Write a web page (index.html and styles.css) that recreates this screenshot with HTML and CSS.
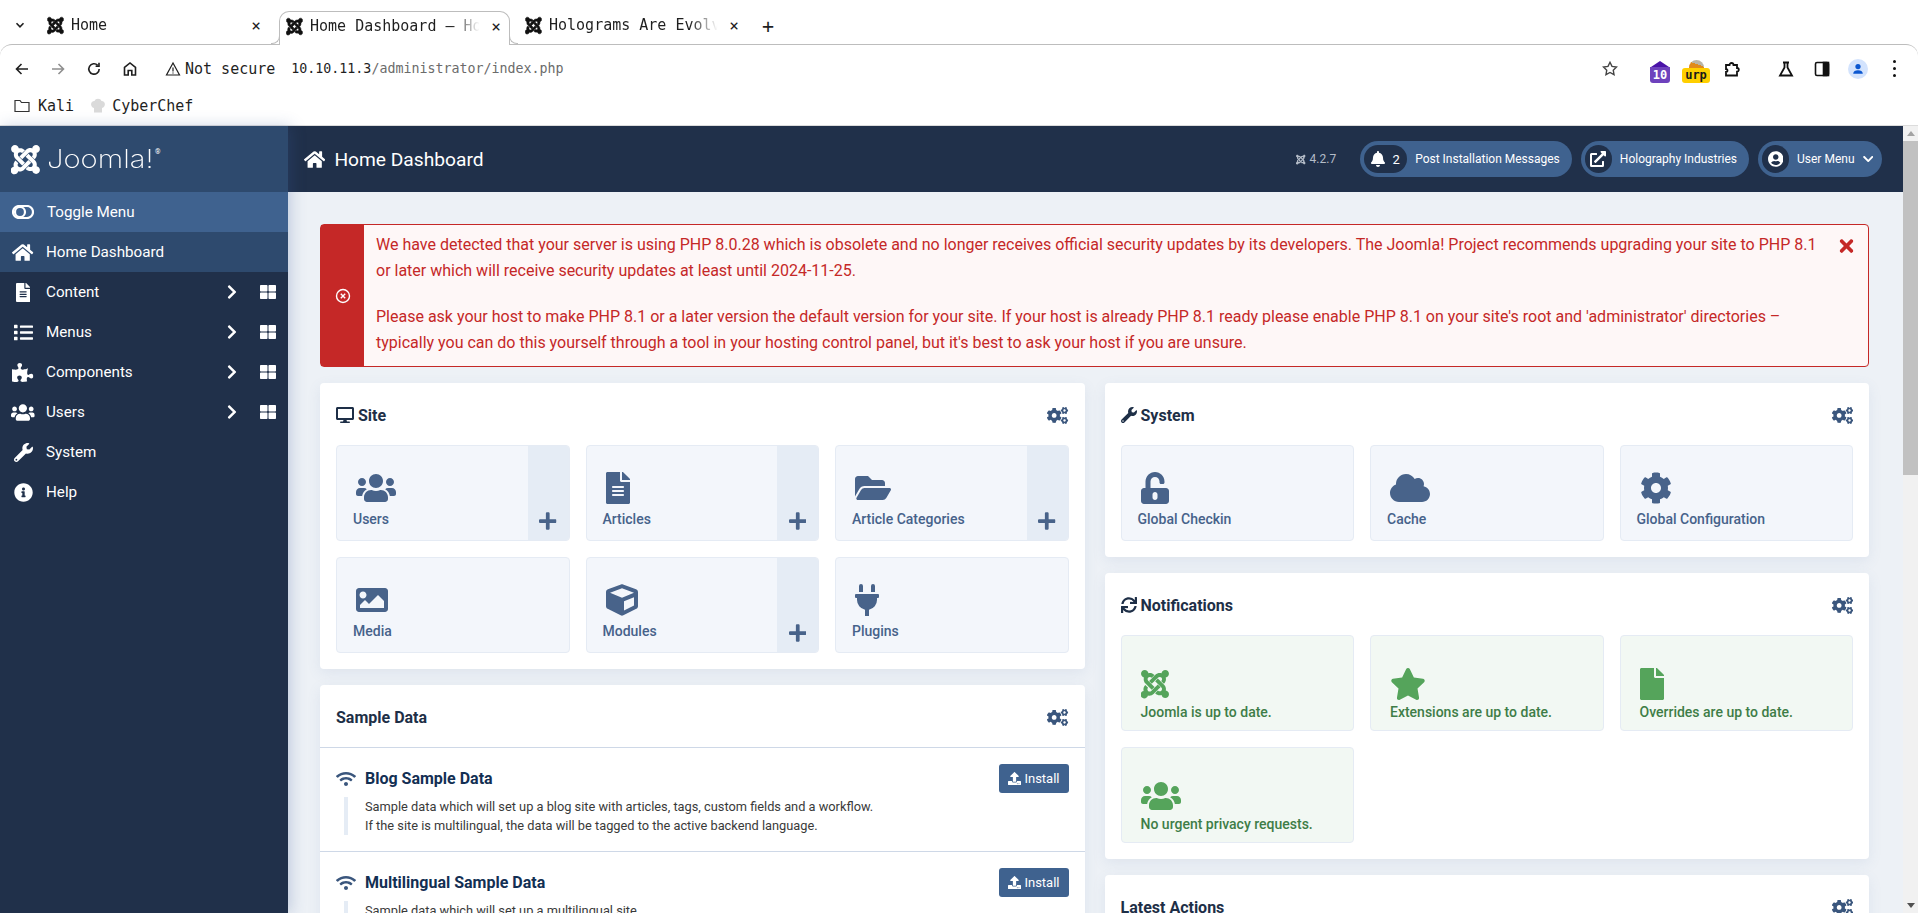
FILE: index.html
```html
<!DOCTYPE html>
<html lang="en">

<head>
    <meta charset="UTF-8">
    <meta name="viewport" content="width=device-width, initial-scale=1.0">
    <title>Home Dashboard - Holography Industries</title>
    <link rel="stylesheet" href="styles.css">
</head>

<body>
    <!-- icon sprite -->
    <svg class="sprite" xmlns="http://www.w3.org/2000/svg">
        <symbol id="i-joomla" viewBox="0 0 448 512"><path d="M.6 92.1C.6 58.8 27.4 32 60.4 32c30 0 54.5 21.9 59.2 50.2 32.6-7.6 67.1.6 96.5 30l-44.3 44.3c-20.5-20.5-42.6-16.3-55.4-3.5-14.3 14.3-14.3 37.9 0 52.2l99.5 99.5-44 44.3c-87.7-87.2-49.7-49.7-99.8-99.7-26.8-26.5-35-64.8-24.8-98.9C20.4 144.6.6 120.7.6 92.1zm129.5 116.4l44.3 44.3c10-10 89.7-89.7 99.7-99.8 14.3-14.3 37.6-14.3 51.9 0 12.8 12.8 17 35-3.5 55.4l44 44.3c31.2-31.2 38.5-67.6 28.9-101.2 29.2-4.1 51.9-29.2 51.9-59.5 0-33.2-26.8-60.1-59.8-60.1-30.3 0-55.4 22.5-59.5 51.6-33.8-9.9-71.7-1.5-98.3 25.1-18.7 19-91.6 92-99.6 100.9zm266.3 152.2c8.2-32.7-.9-68.5-26.3-93.9-11.8-12-97.3-97.3-99.5-99.5l-44.3 44.3 99.5 99.5c14.3 14.3 14.3 37.6 0 51.9-12.8 12.8-35 17-55.4-3.5l-44 44.3c27.6 30.2 68 38.8 102.7 28 5.5 27.4 29.7 48 58.9 48 33 0 59.8-26.8 59.8-60.1 0-30.2-22.5-55-51.4-59zm-84.3-53.1l-44-44.3c-87.2 87.2-49.7 49.7-99.8 99.7-20.5 20.5-42.6 16.3-55.4 3.5-14.3-14.3-14.3-37.6 0-51.9l-44.3-44.3c-26.2 26.2-35.3 63.8-26.3 97.6-28.9 4.6-50.2 29.4-50.2 58.4 0 33.2 26.8 60.1 59.8 60.1 28.9 0 53-20.2 59-47.2 33.3 8.1 67.6-.7 95.6-28.7 13.7-13.5 78.2-78.1 105.6-104z"/></symbol>
        <symbol id="i-home" viewBox="0 0 576 512"><path d="M280.37 148.26L96 300.11V464a16 16 0 0 0 16 16l112.06-.29a16 16 0 0 0 15.92-16V368a16 16 0 0 1 16-16h64a16 16 0 0 1 16 16v95.64a16 16 0 0 0 16 16.05L464 480a16 16 0 0 0 16-16V300L295.67 148.26a12.19 12.19 0 0 0-15.3 0zM571.6 251.47L488 182.56V44.05a12 12 0 0 0-12-12h-56a12 12 0 0 0-12 12v72.61L318.47 43a48 48 0 0 0-61 0L4.34 251.47a12 12 0 0 0-1.6 16.9l25.5 31A12 12 0 0 0 45.15 301l235.22-193.74a12.19 12.19 0 0 1 15.3 0L530.9 301a12 12 0 0 0 16.9-1.6l25.5-31a12 12 0 0 0-1.7-16.93z"/></symbol>
        <symbol id="i-users" viewBox="0 0 640 512"><path d="M96 224c35.3 0 64-28.7 64-64s-28.7-64-64-64-64 28.7-64 64 28.7 64 64 64zm448 0c35.3 0 64-28.7 64-64s-28.7-64-64-64-64 28.7-64 64 28.7 64 64 64zm32 32h-64c-17.6 0-33.5 7.1-45.1 18.6 40.3 22.1 68.9 62 75.1 109.4h66c17.7 0 32-14.3 32-32v-32c0-35.3-28.7-64-64-64zm-256 0c61.9 0 112-50.1 112-112S381.9 32 320 32 208 82.1 208 144s50.1 112 112 112zm76.8 32h-8.3c-20.8 10-43.9 16-68.5 16s-47.6-6-68.5-16h-8.3C179.6 288 128 339.6 128 403.2V432c0 26.5 21.5 48 48 48h288c26.5 0 48-21.5 48-48v-28.8c0-63.6-51.6-115.2-115.2-115.2zm-223.7-13.4C161.5 263.1 145.6 256 128 256H64c-35.3 0-64 28.7-64 64v32c0 17.7 14.3 32 32 32h65.9c6.3-47.4 34.9-87.3 75.2-109.4z"/></symbol>
        <symbol id="i-file-alt" viewBox="0 0 384 512"><path d="M224 136V0H24C10.7 0 0 10.7 0 24v464c0 13.3 10.7 24 24 24h336c13.3 0 24-10.7 24-24V160H248c-13.2 0-24-10.8-24-24zm64 236c0 6.6-5.4 12-12 12H108c-6.6 0-12-5.4-12-12v-8c0-6.6 5.4-12 12-12h168c6.6 0 12 5.4 12 12v8zm0-64c0 6.6-5.4 12-12 12H108c-6.6 0-12-5.4-12-12v-8c0-6.6 5.4-12 12-12h168c6.6 0 12 5.4 12 12v8zm0-72v8c0 6.6-5.4 12-12 12H108c-6.6 0-12-5.4-12-12v-8c0-6.6 5.4-12 12-12h168c6.6 0 12 5.4 12 12zm96-114.1v6.1H256V0h6.1c6.4 0 12.5 2.5 17 7l97.9 98c4.5 4.5 7 10.6 7 16.9z"/></symbol>
        <symbol id="i-file" viewBox="0 0 384 512"><path d="M224 136V0H24C10.7 0 0 10.7 0 24v464c0 13.3 10.7 24 24 24h336c13.3 0 24-10.7 24-24V160H248c-13.2 0-24-10.8-24-24zm160-14.1v6.1H256V0h6.1c6.4 0 12.5 2.5 17 7l97.9 98c4.5 4.5 7 10.6 7 16.9z"/></symbol>
        <symbol id="i-list" viewBox="0 0 512 512"><path d="M80 368H16a16 16 0 0 0-16 16v64a16 16 0 0 0 16 16h64a16 16 0 0 0 16-16v-64a16 16 0 0 0-16-16zm0-320H16A16 16 0 0 0 0 64v64a16 16 0 0 0 16 16h64a16 16 0 0 0 16-16V64a16 16 0 0 0-16-16zm0 160H16a16 16 0 0 0-16 16v64a16 16 0 0 0 16 16h64a16 16 0 0 0 16-16v-64a16 16 0 0 0-16-16zm416 176H176a16 16 0 0 0-16 16v32a16 16 0 0 0 16 16h320a16 16 0 0 0 16-16v-32a16 16 0 0 0-16-16zm0-320H176a16 16 0 0 0-16 16v32a16 16 0 0 0 16 16h320a16 16 0 0 0 16-16V80a16 16 0 0 0-16-16zm0 160H176a16 16 0 0 0-16 16v32a16 16 0 0 0 16 16h320a16 16 0 0 0 16-16v-32a16 16 0 0 0-16-16z"/></symbol>
        <symbol id="i-puzzle" viewBox="0 0 576 512"><path d="M519.442 288.651c-41.519 0-59.5 31.593-82.058 31.593C377.409 320.244 432 144 432 144s-196.288 80-196.288-3.297c0-35.827 36.288-46.25 36.288-85.985C272 19.216 243.885 0 210.539 0c-34.654 0-66.366 18.891-66.366 56.346 0 41.364 31.711 59.277 31.711 81.75C175.885 207.719 0 166.758 0 166.758v333.237s178.635 41.047 178.635-28.662c0-22.473-40-40.107-40-81.471 0-37.456 29.25-56.346 63.577-56.346 33.673 0 61.788 19.216 61.788 54.717 0 39.735-36.288 50.158-36.288 85.985 0 60.803 129.675 25.73 181.23 25.73 0 0-34.725-120.101 25.827-120.101 35.962 0 46.423 36.152 86.308 36.152C556.712 416 576 387.99 576 354.443c0-34.199-18.962-65.792-56.558-65.792z"/></symbol>
        <symbol id="i-wrench" viewBox="0 0 512 512"><path d="M507.73 109.1c-2.24-9.03-13.54-12.09-20.12-5.51l-74.36 74.36-67.88-11.31-11.31-67.88 74.36-74.36c6.62-6.62 3.43-17.9-5.66-20.16-47.38-11.74-99.55.91-136.58 37.93-39.64 39.64-50.55 97.1-34.05 147.2L18.74 402.76c-24.99 24.99-24.99 65.51 0 90.5 24.99 24.99 65.51 24.99 90.5 0l213.21-213.21c50.12 16.71 107.47 5.68 147.37-34.22 37.07-37.07 49.7-89.32 37.91-136.73zM64 472c-13.25 0-24-10.75-24-24 0-13.26 10.75-24 24-24s24 10.74 24 24c0 13.25-10.75 24-24 24z"/></symbol>
        <symbol id="i-info" viewBox="0 0 512 512"><path d="M256 8C119.043 8 8 119.083 8 256c0 136.997 111.043 248 248 248s248-111.003 248-248C504 119.083 392.957 8 256 8zm0 110c23.196 0 42 18.804 42 42s-18.804 42-42 42-42-18.804-42-42 18.804-42 42-42zm56 254c0 6.627-5.373 12-12 12h-88c-6.627 0-12-5.373-12-12v-24c0-6.627 5.373-12 12-12h12v-64h-12c-6.627 0-12-5.373-12-12v-24c0-6.627 5.373-12 12-12h64c6.627 0 12 5.373 12 12v100h12c6.627 0 12 5.373 12 12v24z"/></symbol>
        <symbol id="i-grid" viewBox="0 0 512 512"><path d="M296 32h192c13.255 0 24 10.745 24 24v160c0 13.255-10.745 24-24 24H296c-13.255 0-24-10.745-24-24V56c0-13.255 10.745-24 24-24zm-80 0H24C10.745 32 0 42.745 0 56v160c0 13.255 10.745 24 24 24h192c13.255 0 24-10.745 24-24V56c0-13.255-10.745-24-24-24zM0 296v160c0 13.255 10.745 24 24 24h192c13.255 0 24-10.745 24-24V296c0-13.255-10.745-24-24-24H24c-13.255 0-24 10.745-24 24zm296 184h192c13.255 0 24-10.745 24-24V296c0-13.255-10.745-24-24-24H296c-13.255 0-24 10.745-24 24v160c0 13.255 10.745 24 24 24z"/></symbol>
        <symbol id="i-chevron-right" viewBox="0 0 320 512"><path d="M285.476 272.971L91.132 467.314c-9.373 9.373-24.569 9.373-33.941 0l-22.667-22.667c-9.357-9.357-9.375-24.522-.04-33.901L188.505 256 34.484 101.255c-9.335-9.379-9.317-24.544.04-33.901l22.667-22.667c9.373-9.373 24.569-9.373 33.941 0L285.475 239.03c9.373 9.372 9.373 24.568.001 33.941z"/></symbol>
        <symbol id="i-chevron-down" viewBox="0 0 448 512"><path d="M207.029 381.476L12.686 187.132c-9.373-9.373-9.373-24.569 0-33.941l22.667-22.667c9.357-9.357 24.522-9.375 33.901-.04L224 284.505l154.745-154.021c9.379-9.335 24.544-9.317 33.901.04l22.667 22.667c9.373 9.373 9.373 24.569 0 33.941L240.971 381.476c-9.373 9.372-24.569 9.372-33.942 0z"/></symbol>
        <symbol id="i-plus" viewBox="0 0 448 512"><path d="M416 208H272V64c0-17.67-14.33-32-32-32h-32c-17.67 0-32 14.33-32 32v144H32c-17.67 0-32 14.33-32 32v32c0 17.67 14.33 32 32 32h144v144c0 17.67 14.33 32 32 32h32c17.67 0 32-14.33 32-32V304h144c17.67 0 32-14.33 32-32v-32c0-17.67-14.33-32-32-32z"/></symbol>
        <symbol id="i-desktop" viewBox="0 0 576 512"><path d="M528 0H48C21.5 0 0 21.5 0 48v320c0 26.5 21.5 48 48 48h192l-16 48h-72c-13.3 0-24 10.7-24 24s10.7 24 24 24h272c13.3 0 24-10.7 24-24s-10.7-24-24-24h-72l-16-48h192c26.5 0 48-21.5 48-48V48c0-26.5-21.5-48-48-48zm-16 352H64V64h448v288z"/></symbol>
        <symbol id="i-cogs" viewBox="0 0 640 512"><path d="M512.1 191l-8.2 14.3c-3 5.3-9.4 7.5-15.1 5.4-11.8-4.4-22.6-10.7-32.1-18.6-4.6-3.8-5.8-10.5-2.8-15.7l8.2-14.3c-6.9-8-12.3-17.3-15.9-27.4h-16.5c-6 0-11.2-4.3-12.2-10.3-2-12-2.1-24.6 0-37.1 1-6 6.2-10.4 12.2-10.4h16.5c3.6-10.1 9-19.4 15.9-27.4l-8.2-14.3c-3-5.2-1.9-11.9 2.8-15.7 9.5-7.9 20.4-14.2 32.1-18.6 5.7-2.1 12.1.1 15.1 5.4l8.2 14.3c10.5-1.9 21.2-1.9 31.7 0L552 6.3c3-5.3 9.4-7.5 15.1-5.4 11.8 4.4 22.6 10.7 32.1 18.6 4.6 3.8 5.8 10.5 2.8 15.7l-8.2 14.3c6.9 8 12.3 17.3 15.9 27.4h16.5c6 0 11.2 4.3 12.2 10.3 2 12 2.1 24.6 0 37.1-1 6-6.2 10.4-12.2 10.4h-16.5c-3.6 10.1-9 19.4-15.9 27.4l8.2 14.3c3 5.2 1.9 11.9-2.8 15.7-9.5 7.9-20.4 14.2-32.1 18.6-5.7 2.1-12.1-.1-15.1-5.4l-8.2-14.3c-10.4 1.9-21.2 1.9-31.7 0zm-10.5-58.8c38.5 29.6 82.4-14.3 52.8-52.8-38.5-29.7-82.4 14.3-52.8 52.8zM386.3 286.1l33.7 16.8c10.1 5.8 14.5 18.1 10.5 29.1-8.9 24.2-26.4 46.4-42.6 65.8-7.4 8.9-20.2 11.1-30.3 5.3l-29.1-16.8c-16 13.7-34.6 24.6-54.9 31.7v33.6c0 11.6-8.3 21.6-19.7 23.6-24.6 4.2-50.4 4.4-75.9 0-11.5-2-20-11.9-20-23.6V418c-20.3-7.2-38.9-18-54.9-31.7L74 403c-10 5.8-22.9 3.6-30.3-5.3-16.2-19.4-33.3-41.6-42.2-65.7-4-10.9.4-23.2 10.5-29.1l33.3-16.8c-3.9-20.9-3.9-42.4 0-63.4L12 205.8c-10.1-5.8-14.6-18.1-10.5-29 8.9-24.2 26-46.4 42.2-65.8 7.4-8.9 20.2-11.1 30.3-5.3l29.1 16.8c16-13.7 34.6-24.6 54.9-31.7V57.1c0-11.5 8.2-21.5 19.6-23.5 24.6-4.2 50.5-4.4 76-.1 11.5 2 20 11.9 20 23.6v33.6c20.3 7.2 38.9 18 54.9 31.7l29.1-16.8c10-5.8 22.9-3.6 30.3 5.3 16.2 19.4 33.2 41.6 42.1 65.8 4 10.9.1 23.2-10 29.1l-33.7 16.8c3.9 21 3.9 42.5 0 63.5zm-117.6 21.1c59.2-77-28.7-164.9-105.7-105.7-59.2 77 28.7 164.9 105.7 105.7zm243.4 182.7l-8.2 14.3c-3 5.3-9.4 7.5-15.1 5.4-11.8-4.4-22.6-10.7-32.1-18.6-4.6-3.8-5.8-10.5-2.8-15.7l8.2-14.3c-6.9-8-12.3-17.3-15.9-27.4h-16.5c-6 0-11.2-4.3-12.2-10.3-2-12-2.1-24.6 0-37.1 1-6 6.2-10.4 12.2-10.4h16.5c3.6-10.1 9-19.4 15.9-27.4l-8.2-14.3c-3-5.2-1.9-11.9 2.8-15.7 9.5-7.9 20.4-14.2 32.1-18.6 5.7-2.1 12.1.1 15.1 5.4l8.2 14.3c10.5-1.9 21.2-1.9 31.7 0l8.2-14.3c3-5.3 9.4-7.5 15.1-5.4 11.8 4.4 22.6 10.7 32.1 18.6 4.6 3.8 5.8 10.5 2.8 15.7l-8.2 14.3c6.9 8 12.3 17.3 15.9 27.4h16.5c6 0 11.2 4.3 12.2 10.3 2 12 2.1 24.6 0 37.1-1 6-6.2 10.4-12.2 10.4h-16.5c-3.6 10.1-9 19.4-15.9 27.4l8.2 14.3c3 5.2 1.9 11.9-2.8 15.7-9.5 7.9-20.4 14.2-32.1 18.6-5.7 2.1-12.1-.1-15.1-5.4l-8.2-14.3c-10.4 1.9-21.2 1.9-31.7 0zM501.6 431c38.5 29.6 82.4-14.3 52.8-52.8-38.5-29.6-82.4 14.3-52.8 52.8z"/></symbol>
        <symbol id="i-folder-open" viewBox="0 0 576 512"><path d="M572.694 292.093L500.27 416.248A63.997 63.997 0 0 1 444.989 448H45.025c-18.523 0-30.064-20.093-20.731-36.093l72.424-124.155A64 64 0 0 1 152 256h399.964c18.523 0 30.064 20.093 20.73 36.093zM152 224h328v-48c0-26.51-21.49-48-48-48H272l-64-64H48C21.49 64 0 85.49 0 112v278.046l69.077-118.418C86.214 242.25 117.989 224 152 224z"/></symbol>
        <symbol id="i-image" viewBox="0 0 512 512"><path d="M464 448H48c-26.51 0-48-21.49-48-48V112c0-26.51 21.49-48 48-48h416c26.51 0 48 21.49 48 48v288c0 26.51-21.49 48-48 48zM112 120c-30.928 0-56 25.072-56 56s25.072 56 56 56 56-25.072 56-56-25.072-56-56-56zM64 384h384V272l-87.515-87.515c-4.686-4.686-12.284-4.686-16.971 0L208 320l-55.515-55.515c-4.686-4.686-12.284-4.686-16.971 0L64 336v48z"/></symbol>
        <symbol id="i-cube" viewBox="0 0 512 512"><path d="M239.1 6.3l-208 78c-18.7 7-31.1 25-31.1 45v225.1c0 18.2 10.3 34.8 26.5 42.9l208 104c13.5 6.8 29.4 6.8 42.9 0l208-104c16.3-8.1 26.5-24.8 26.5-42.9V129.3c0-20-12.4-37.9-31.1-44.9l-208-78C262 2.2 250 2.2 239.1 6.3zM256 68.4l192 72v1.1l-192 78-192-78v-1.1l192-72zm32 356V275.5l160-65v133.9l-160 80z"/></symbol>
        <symbol id="i-plug" viewBox="0 0 384 512"><path d="M320,32a32,32,0,0,0-64,0v96h64Zm48,128H16A16,16,0,0,0,0,176v32a16,16,0,0,0,16,16H32v32A160.07,160.07,0,0,0,160,412.8V512h64V412.8A160.07,160.07,0,0,0,352,256V224h16a16,16,0,0,0,16-16V176A16,16,0,0,0,368,160ZM128,32a32,32,0,0,0-64,0v96h64Z"/></symbol>
        <symbol id="i-unlock" viewBox="0 0 448 512"><path d="M400 256H152V152.9c0-39.6 31.7-72.5 71.3-72.9 40-.4 72.7 32.1 72.7 72v16c0 13.3 10.7 24 24 24h32c13.3 0 24-10.7 24-24v-16C376 68 307.5-.3 223.5 0 139.5.3 72 69.5 72 153.5V256H48c-26.5 0-48 21.5-48 48v160c0 26.5 21.5 48 48 48h352c26.5 0 48-21.5 48-48V304c0-26.5-21.5-48-48-48zM264 408c0 22.1-17.9 40-40 40s-40-17.9-40-40v-48c0-22.1 17.9-40 40-40s40 17.9 40 40v48z"/></symbol>
        <symbol id="i-cloud" viewBox="0 0 640 512"><path d="M537.6 226.6c4.1-10.7 6.4-22.4 6.4-34.6 0-53-43-96-96-96-19.7 0-38.1 6-53.3 16.2C367 64.2 315.3 32 256 32c-88.4 0-160 71.6-160 160 0 2.7.1 5.4.2 8.1C40.2 219.8 0 273.2 0 336c0 79.5 64.5 144 144 144h368c70.7 0 128-57.3 128-128 0-61.9-44-113.6-102.4-125.4z"/></symbol>
        <symbol id="i-cog" viewBox="0 0 512 512"><path d="M487.4 315.7l-42.6-24.6c4.3-23.2 4.3-47 0-70.2l42.6-24.6c4.9-2.8 7.1-8.6 5.5-14-11.1-35.6-30-67.8-54.7-94.6-3.8-4.1-10-5.1-14.8-2.3L380.8 110c-17.9-15.4-38.5-27.3-60.8-35.1V25.8c0-5.6-3.9-10.5-9.4-11.7-36.7-8.2-74.3-7.8-109.2 0-5.5 1.2-9.4 6.1-9.4 11.7V75c-22.2 7.9-42.8 19.8-60.8 35.1L88.7 85.5c-4.9-2.8-11-1.9-14.8 2.3-24.7 26.7-43.6 58.9-54.7 94.6-1.7 5.4.6 11.2 5.5 14L67.3 221c-4.3 23.2-4.3 47 0 70.2l-42.6 24.6c-4.9 2.8-7.1 8.6-5.5 14 11.1 35.6 30 67.8 54.7 94.6 3.8 4.1 10 5.1 14.8 2.3l42.6-24.6c17.9 15.4 38.5 27.3 60.8 35.1v49.2c0 5.6 3.9 10.5 9.4 11.7 36.7 8.2 74.3 7.8 109.2 0 5.5-1.2 9.4-6.1 9.4-11.7v-49.2c22.2-7.9 42.8-19.8 60.8-35.1l42.6 24.6c4.9 2.8 11 1.9 14.8-2.3 24.7-26.7 43.6-58.9 54.7-94.6 1.5-5.5-.7-11.3-5.6-14.1zM256 336c-44.1 0-80-35.9-80-80s35.9-80 80-80 80 35.9 80 80-35.9 80-80 80z"/></symbol>
        <symbol id="i-sync" viewBox="0 0 512 512"><path d="M440.65 12.57l4 82.77A247.16 247.16 0 0 0 255.83 8C134.73 8 33.91 94.92 12.29 209.82A12 12 0 0 0 24.09 224h49.05a12 12 0 0 0 11.67-9.26 175.91 175.91 0 0 1 317-56.94l-101.46-4.86a12 12 0 0 0-12.57 12v47.41a12 12 0 0 0 12 12H500a12 12 0 0 0 12-12V12a12 12 0 0 0-12-12h-47.37a12 12 0 0 0-11.98 12.57zM255.83 432a175.61 175.61 0 0 1-146-77.8l101.8 4.87a12 12 0 0 0 12.57-12v-47.4a12 12 0 0 0-12-12H12a12 12 0 0 0-12 12V500a12 12 0 0 0 12 12h47.35a12 12 0 0 0 12-12.6l-4.15-82.57A247.17 247.17 0 0 0 255.83 504c121.11 0 221.93-86.92 243.55-201.82a12 12 0 0 0-11.8-14.18h-49.05a12 12 0 0 0-11.67 9.26A175.86 175.86 0 0 1 255.83 432z"/></symbol>
        <symbol id="i-star" viewBox="0 0 576 512"><path d="M259.3 17.8L194 150.2 47.9 171.5c-26.2 3.8-36.7 36.1-17.7 54.6l105.7 103-25 145.5c-4.5 26.3 23.2 46 46.4 33.7L288 439.6l130.7 68.7c23.2 12.2 50.9-7.4 46.4-33.7l-25-145.5 105.7-103c19-18.5 8.5-50.8-17.7-54.6L382 150.2 316.7 17.8c-11.7-23.6-45.6-23.9-57.4 0z"/></symbol>
        <symbol id="i-wifi" viewBox="0 0 640 512"><path d="M634.91 154.88C457.74-8.99 182.19-8.93 5.09 154.88c-6.66 6.16-6.79 16.59-.35 22.98l34.24 33.97c6.14 6.1 16.02 6.23 22.4.38 145.92-133.68 371.3-133.71 517.25 0 6.38 5.85 16.26 5.71 22.4-.38l34.24-33.97c6.43-6.39 6.3-16.82-.36-22.98zM320 352c-35.35 0-64 28.65-64 64s28.65 64 64 64 64-28.65 64-64-28.65-64-64-64zm202.67-83.59c-115.26-101.93-290.21-101.82-405.34 0-6.9 6.1-7.12 16.69-.57 23.15l34.44 33.99c6 5.92 15.66 6.32 22.05.8 83.95-72.57 209.74-72.41 293.49 0 6.39 5.52 16.05 5.13 22.05-.8l34.44-33.99c6.56-6.46 6.33-17.06-.56-23.15z"/></symbol>
        <symbol id="i-upload" viewBox="0 0 512 512"><path d="M296 384h-80c-13.3 0-24-10.7-24-24V192h-87.7c-17.8 0-26.7-21.5-14.1-34.1L242.3 5.7c7.5-7.5 19.8-7.5 27.3 0l152.2 152.2c12.6 12.6 3.7 34.1-14.1 34.1H320v168c0 13.3-10.7 24-24 24zm216-8v112c0 13.3-10.7 24-24 24H24c-13.3 0-24-10.7-24-24V376c0-13.3 10.7-24 24-24h136v8c0 30.9 25.1 56 56 56h80c30.9 0 56-25.1 56-56v-8h136c13.3 0 24 10.7 24 24zm-124 88c0-11-9-20-20-20s-20 9-20 20 9 20 20 20 20-9 20-20zm64 0c0-11-9-20-20-20s-20 9-20 20 9 20 20 20 20-9 20-20z"/></symbol>
        <symbol id="i-bell" viewBox="0 0 448 512"><path d="M224 512c35.32 0 63.97-28.65 63.97-64H160.03c0 35.35 28.65 64 63.97 64zm215.39-149.71c-19.32-20.76-55.47-51.99-55.47-154.29 0-77.7-54.48-139.9-127.94-155.16V32c0-17.67-14.32-32-31.98-32s-31.98 14.33-31.98 32v20.84C118.56 68.1 64.08 130.3 64.08 208c0 102.3-36.15 133.53-55.47 154.29-6 6.45-8.66 14.16-8.61 21.71.11 16.4 12.98 32 32.1 32h383.8c19.12 0 32-15.6 32.1-32 .05-7.55-2.61-15.27-8.61-21.71z"/></symbol>
        <symbol id="i-external" viewBox="0 0 512 512"><path d="M432,320H400a16,16,0,0,0-16,16V448H64V128H208a16,16,0,0,0,16-16V80a16,16,0,0,0-16-16H48A48,48,0,0,0,0,112V464a48,48,0,0,0,48,48H400a48,48,0,0,0,48-48V336A16,16,0,0,0,432,320ZM488,0h-128c-21.37,0-32.05,25.91-17,41l35.73,35.73L135,320.37a24,24,0,0,0,0,34L157.67,377a24,24,0,0,0,34,0L435.28,133.32,471,169c15,15,41,4.5,41-17V24A24,24,0,0,0,488,0Z"/></symbol>
        <symbol id="i-user-circle" viewBox="0 0 496 512"><path d="M248 8C111 8 0 119 0 256s111 248 248 248 248-111 248-248S385 8 248 8zm0 96c48.6 0 88 39.4 88 88s-39.4 88-88 88-88-39.4-88-88 39.4-88 88-88zm0 344c-58.7 0-111.3-26.6-146.5-68.2 18.8-35.4 55.6-59.8 98.5-59.8 2.4 0 4.8.4 7.1 1.1 13 4.2 26.6 6.9 40.9 6.9 14.3 0 28-2.7 40.9-6.9 2.3-.7 4.7-1.1 7.1-1.1 42.9 0 79.7 24.4 98.5 59.8C359.3 421.4 306.7 448 248 448z"/></symbol>
        <symbol id="i-times" viewBox="0 0 352 512"><path d="M242.72 256l100.07-100.07c12.28-12.28 12.28-32.19 0-44.48l-22.24-22.24c-12.28-12.28-32.19-12.28-44.48 0L176 189.28 75.93 89.21c-12.28-12.28-32.19-12.28-44.48 0L9.21 111.45c-12.28 12.28-12.28 32.19 0 44.48L109.28 256 9.21 356.07c-12.28 12.28-12.28 32.19 0 44.48l22.24 22.24c12.28 12.28 32.2 12.28 44.48 0L176 322.72l100.07 100.07c12.28 12.28 32.2 12.28 44.48 0l22.24-22.24c12.28-12.28 12.28-32.19 0-44.48L242.72 256z"/></symbol>
    </svg>

    <div class="browser">
        <!-- tabs -->
        <div class="tabstrip">
            <svg class="tab-list" viewBox="0 0 10 10"><path d="M1.5 3.2 5 6.8l3.5-3.6" /></svg>
            <div class="tab">
                <svg class="favicon" viewBox="0 0 448 512"><use href="#i-joomla" /></svg>
                <span class="tab-title">Home</span>
                <span class="tab-close">×</span>
            </div>
            <div class="tab tab-active">
                <svg class="favicon" viewBox="0 0 448 512"><use href="#i-joomla" /></svg>
                <span class="tab-title">Home Dashboard – Holography Industries</span>
                <span class="tab-close">×</span>
            </div>
            <div class="tab">
                <svg class="favicon" viewBox="0 0 448 512"><use href="#i-joomla" /></svg>
                <span class="tab-title">Holograms Are Evolving</span>
                <span class="tab-close">×</span>
            </div>
            <span class="tab-new">+</span>
        </div>

        <!-- address bar -->
        <div class="toolbar">
            <svg class="tool-icon" viewBox="0 0 16 16"><path d="M14 8H3M7.5 3 2.5 8l5 5" /></svg>
            <svg class="tool-icon tool-off" viewBox="0 0 16 16"><path d="M2 8h11M8.5 3l5 5-5 5" /></svg>
            <svg class="tool-icon" viewBox="0 0 16 16"><path d="M13.2 8a5.2 5.2 0 1 1-1.5-3.7M13 1.8v3.4H9.6" /></svg>
            <svg class="tool-icon" viewBox="0 0 16 16"><path d="M2.5 14V6.5L8 2l5.500 4.500V14H9.800V9.500H6.200V14Z" /></svg>
            <div class="omnibox">
                <svg class="warn-icon" viewBox="0 0 16 16"><path d="M8 2 1.500 14h13Z" /><path d="M8 6.500v4M8 11.500v1" /></svg>
                <span class="not-secure">Not secure</span>
                <span class="url">10.10.11.3<span class="url-path">/administrator/index.php</span></span>
            </div>
            <div class="tool-right">
                <svg class="tool-star" viewBox="0 0 576 512"><path d="M288 40 352 170 496 191 392 293 417 436 288 368 159 436 184 293 80 191 224 170Z" /></svg>
                <div class="ext-ten"><span class="ext-ten-roof"></span><span class="ext-ten-num">10</span></div>
                <div class="ext-urp"><span class="ext-urp-top"></span><span class="ext-urp-txt">urp</span></div>
                <svg class="tool-ext" viewBox="0 0 16 16"><path d="M2 4h3.500a2 2 0 0 1 4 0h3.500v3a1.800 1.800 0 0 1 0 3.600V14.500H2V11a1.500 1.500 0 0 0 0-3Z" /></svg>
                <svg class="tool-flask" viewBox="0 0 16 16"><path d="M5 1.500h6M6.500 1.500v5L2 14.500h12L9.500 6.500v-5" /></svg>
                <svg class="tool-panel" viewBox="0 0 16 16"><rect x="1.500" y="1.500" width="13" height="13" rx="1.500" /><rect class="fill" x="9.500" y="1.500" width="5" height="13" /></svg>
                <div class="profile">
                    <svg viewBox="0 0 16 16"><circle cx="8" cy="5.200" r="3" /><path d="M2.500 13.500c0-2.800 2.500-4 5.500-4s5.500 1.200 5.500 4Z" /></svg>
                </div>
                <div class="tool-dots"><span></span><span></span><span></span></div>
            </div>
        </div>

        <!-- bookmarks -->
        <div class="bookmarks">
            <svg class="bm-folder" viewBox="0 0 16 14"><path d="M1 12.500V1.500h5l1.500 2h7.500v9Z" /></svg>
            <span class="bm-name">Kali</span>
            <svg class="bm-chef" viewBox="0 0 16 16"><path d="M4 10C0 9 0 3 4.500 3 5.500 0 10.500 0 11.500 3 16 3 16 9 12 10V14.500H4Z" /></svg>
            <span class="bm-name">CyberChef</span>
        </div>

        <!-- page -->
        <div class="page">
            <aside class="sidebar">
                <div class="logo">
                    <svg class="logo-icon" viewBox="0 0 448 512"><use href="#i-joomla" /></svg>
                    <span class="logo-word">Joomla!</span><span class="logo-reg">®</span>
                </div>
                <nav class="menu">
                    <a class="menu-item menu-toggle">
                        <span class="menu-icon">
                            <svg class="toggle-icon" viewBox="0 0 22 14"><rect x="1" y="1" width="20" height="12" rx="6" /><circle cx="8" cy="7" r="5" /></svg>
                        </span>
                        <span class="menu-text">Toggle Menu</span>
                    </a>
                    <a class="menu-item menu-current">
                        <span class="menu-icon"><svg viewBox="0 0 576 512"><use href="#i-home" /></svg></span>
                        <span class="menu-text">Home Dashboard</span>
                    </a>
                    <a class="menu-item">
                        <span class="menu-icon"><svg viewBox="0 0 384 512"><use href="#i-file-alt" /></svg></span>
                        <span class="menu-text">Content</span>
                        <svg class="menu-chevron" viewBox="0 0 320 512"><use href="#i-chevron-right" /></svg>
                        <svg class="menu-grid" viewBox="0 0 512 512"><use href="#i-grid" /></svg>
                    </a>
                    <a class="menu-item">
                        <span class="menu-icon"><svg viewBox="0 0 512 512"><use href="#i-list" /></svg></span>
                        <span class="menu-text">Menus</span>
                        <svg class="menu-chevron" viewBox="0 0 320 512"><use href="#i-chevron-right" /></svg>
                        <svg class="menu-grid" viewBox="0 0 512 512"><use href="#i-grid" /></svg>
                    </a>
                    <a class="menu-item">
                        <span class="menu-icon"><svg viewBox="0 0 576 512"><use href="#i-puzzle" /></svg></span>
                        <span class="menu-text">Components</span>
                        <svg class="menu-chevron" viewBox="0 0 320 512"><use href="#i-chevron-right" /></svg>
                        <svg class="menu-grid" viewBox="0 0 512 512"><use href="#i-grid" /></svg>
                    </a>
                    <a class="menu-item">
                        <span class="menu-icon"><svg viewBox="0 0 640 512"><use href="#i-users" /></svg></span>
                        <span class="menu-text">Users</span>
                        <svg class="menu-chevron" viewBox="0 0 320 512"><use href="#i-chevron-right" /></svg>
                        <svg class="menu-grid" viewBox="0 0 512 512"><use href="#i-grid" /></svg>
                    </a>
                    <a class="menu-item">
                        <span class="menu-icon"><svg viewBox="0 0 512 512"><use href="#i-wrench" /></svg></span>
                        <span class="menu-text">System</span>
                    </a>
                    <a class="menu-item">
                        <span class="menu-icon"><svg viewBox="0 0 512 512"><use href="#i-info" /></svg></span>
                        <span class="menu-text">Help</span>
                    </a>
                </nav>
            </aside>

            <div class="wrapper">
                <header class="topbar">
                    <svg class="topbar-home" viewBox="0 0 576 512"><use href="#i-home" /></svg>
                    <h1 class="topbar-title">Home Dashboard</h1>
                    <div class="version">
                        <svg viewBox="0 0 448 512"><use href="#i-joomla" /></svg>
                        <span>4.2.7</span>
                    </div>
                    <a class="pill">
                        <span class="pill-icon pill-icon-wide">
                            <svg viewBox="0 0 448 512"><use href="#i-bell" /></svg>
                            <span>2</span>
                        </span>
                        <span class="pill-text">Post Installation Messages</span>
                    </a>
                    <a class="pill">
                        <span class="pill-icon"><svg viewBox="0 0 512 512"><use href="#i-external" /></svg></span>
                        <span class="pill-text">Holography Industries</span>
                    </a>
                    <a class="pill pill-last">
                        <span class="pill-icon"><svg viewBox="0 0 496 512"><use href="#i-user-circle" /></svg></span>
                        <span class="pill-text">User Menu</span>
                        <svg class="pill-chevron" viewBox="0 0 448 512"><use href="#i-chevron-down" /></svg>
                    </a>
                </header>

                <main class="content">
                    <div class="alert">
                        <div class="alert-side">
                            <svg viewBox="0 0 16 16"><circle cx="8" cy="8" r="6.500" /><path d="M5.800 5.800l4.400 4.400M10.200 5.800l-4.400 4.400" /></svg>
                        </div>
                        <div class="alert-body">
                            <p>We have detected that your server is using PHP 8.0.28 which is obsolete and no longer receives official security updates by its developers. The Joomla! Project recommends upgrading your site to PHP 8.1 or later which will receive security updates at least until 2024-11-25.</p>
                            <p>Please ask your host to make PHP 8.1 or a later version the default version for your site. If your host is already PHP 8.1 ready please enable PHP 8.1 on your site's root and 'administrator' directories – typically you can do this yourself through a tool in your hosting control panel, but it's best to ask your host if you are unsure.</p>
                        </div>
                        <svg class="alert-close" viewBox="0 0 352 512"><use href="#i-times" /></svg>
                    </div>

                    <div class="columns">
                        <div class="column">
                            <section class="card">
                                <div class="card-head">
                                    <h2><svg viewBox="0 0 576 512"><use href="#i-desktop" /></svg>Site</h2>
                                    <svg class="card-cog" viewBox="0 0 640 512"><use href="#i-cogs" /></svg>
                                </div>
                                <div class="tiles">
                                    <div class="tile">
                                        <div class="tile-main"><svg viewBox="0 0 640 512"><use href="#i-users" /></svg><span>Users</span></div>
                                        <div class="tile-add"><svg viewBox="0 0 448 512"><use href="#i-plus" /></svg></div>
                                    </div>
                                    <div class="tile">
                                        <div class="tile-main"><svg viewBox="0 0 384 512"><use href="#i-file-alt" /></svg><span>Articles</span></div>
                                        <div class="tile-add"><svg viewBox="0 0 448 512"><use href="#i-plus" /></svg></div>
                                    </div>
                                    <div class="tile">
                                        <div class="tile-main"><svg viewBox="0 0 576 512"><use href="#i-folder-open" /></svg><span>Article Categories</span></div>
                                        <div class="tile-add"><svg viewBox="0 0 448 512"><use href="#i-plus" /></svg></div>
                                    </div>
                                    <div class="tile">
                                        <div class="tile-main"><svg viewBox="0 0 512 512"><use href="#i-image" /></svg><span>Media</span></div>
                                    </div>
                                    <div class="tile">
                                        <div class="tile-main"><svg viewBox="0 0 512 512"><use href="#i-cube" /></svg><span>Modules</span></div>
                                        <div class="tile-add"><svg viewBox="0 0 448 512"><use href="#i-plus" /></svg></div>
                                    </div>
                                    <div class="tile">
                                        <div class="tile-main"><svg viewBox="0 0 384 512"><use href="#i-plug" /></svg><span>Plugins</span></div>
                                    </div>
                                </div>
                            </section>

                            <section class="card card-list">
                                <div class="card-head card-head-line">
                                    <h2>Sample Data</h2>
                                    <svg class="card-cog" viewBox="0 0 640 512"><use href="#i-cogs" /></svg>
                                </div>
                                <div class="sample">
                                    <div class="sample-top">
                                        <svg viewBox="0 0 640 512"><use href="#i-wifi" /></svg>
                                        <h3>Blog Sample Data</h3>
                                        <a class="btn-install"><svg viewBox="0 0 512 512"><use href="#i-upload" /></svg>Install</a>
                                    </div>
                                    <p class="sample-desc">Sample data which will set up a blog site with articles, tags, custom fields and a workflow.<br>If the site is multilingual, the data will be tagged to the active backend language.</p>
                                </div>
                                <div class="sample">
                                    <div class="sample-top">
                                        <svg viewBox="0 0 640 512"><use href="#i-wifi" /></svg>
                                        <h3>Multilingual Sample Data</h3>
                                        <a class="btn-install"><svg viewBox="0 0 512 512"><use href="#i-upload" /></svg>Install</a>
                                    </div>
                                    <p class="sample-desc">Sample data which will set up a multilingual site.<br>Before launching, please install the content languages.</p>
                                </div>
                            </section>
                        </div>

                        <div class="column">
                            <section class="card">
                                <div class="card-head">
                                    <h2><svg viewBox="0 0 512 512"><use href="#i-wrench" /></svg>System</h2>
                                    <svg class="card-cog" viewBox="0 0 640 512"><use href="#i-cogs" /></svg>
                                </div>
                                <div class="tiles">
                                    <div class="tile">
                                        <div class="tile-main"><svg viewBox="0 0 448 512"><use href="#i-unlock" /></svg><span>Global Checkin</span></div>
                                    </div>
                                    <div class="tile">
                                        <div class="tile-main"><svg viewBox="0 0 640 512"><use href="#i-cloud" /></svg><span>Cache</span></div>
                                    </div>
                                    <div class="tile">
                                        <div class="tile-main"><svg viewBox="0 0 512 512"><use href="#i-cog" /></svg><span>Global Configuration</span></div>
                                    </div>
                                </div>
                            </section>

                            <section class="card">
                                <div class="card-head">
                                    <h2><svg viewBox="0 0 512 512"><use href="#i-sync" /></svg>Notifications</h2>
                                    <svg class="card-cog" viewBox="0 0 640 512"><use href="#i-cogs" /></svg>
                                </div>
                                <div class="tiles">
                                    <div class="tile tile-ok">
                                        <div class="tile-main"><svg viewBox="0 0 448 512"><use href="#i-joomla" /></svg><span>Joomla is up to date.</span></div>
                                    </div>
                                    <div class="tile tile-ok">
                                        <div class="tile-main"><svg viewBox="0 0 576 512"><use href="#i-star" /></svg><span>Extensions are up to date.</span></div>
                                    </div>
                                    <div class="tile tile-ok">
                                        <div class="tile-main"><svg viewBox="0 0 384 512"><use href="#i-file" /></svg><span>Overrides are up to date.</span></div>
                                    </div>
                                    <div class="tile tile-ok">
                                        <div class="tile-main"><svg viewBox="0 0 640 512"><use href="#i-users" /></svg><span>No urgent privacy requests.</span></div>
                                    </div>
                                </div>
                            </section>

                            <section class="card">
                                <div class="card-head">
                                    <h2>Latest Actions</h2>
                                    <svg class="card-cog" viewBox="0 0 640 512"><use href="#i-cogs" /></svg>
                                </div>
                            </section>
                        </div>
                    </div>
                </main>
            </div>

            <!-- page scrollbar -->
            <div class="scrollbar">
                <span class="scroll-up"></span>
                <span class="scroll-thumb"></span>
                <span class="scroll-down"></span>
            </div>
        </div>
    </div>
</body>

</html>
```

FILE: styles.css
```css
* {
    box-sizing: border-box;
}

html,
body {
    margin: 0;
    padding: 0;
    height: 100%;
    overflow: hidden;
}

body {
    font-family: Roboto, "Liberation Sans", sans-serif;
    background-color: #fff;
}

h1,
h2,
h3,
p {
    margin: 0;
}

.sprite {
    position: absolute;
    width: 0;
    height: 0;
}

.browser {
    display: flex;
    flex-direction: column;
    height: 913px;
}

/* tabs */
.tabstrip {
    display: flex;
    align-items: flex-end;
    height: 44px;
    padding-left: 15px;
    font-family: "DejaVu Sans Mono", monospace;
    font-size: 15px;
    color: #1f1f1f;
    position: relative;
    z-index: 2;
}

.tab-list {
    width: 10px;
    height: 10px;
    margin: 0 15px 14px 0;
    fill: none;
    stroke: #1f1f1f;
    stroke-width: 1.6;
}

.tab {
    display: flex;
    align-items: center;
    width: 231px;
    height: 33px;
    margin-right: 8px;
    padding: 0 10px 5px 7px;
    position: relative;
}

.tab-active {
    height: 34px;
    margin-bottom: -1px;
    background-color: #fff;
    border: 1px solid #bdbdbd;
    border-bottom: 0;
    border-radius: 10px 10px 0 0;
    padding: 0 8px 5px 6px;
}

.tab-active::before,
.tab-active::after {
    content: "";
    position: absolute;
    bottom: 1px;
    width: 8px;
    height: 8px;
    border-bottom: 1px solid #bdbdbd;
}

.tab-active::before {
    left: -9px;
    border-right: 1px solid #bdbdbd;
    border-bottom-right-radius: 8px;
}

.tab-active::after {
    right: -9px;
    border-left: 1px solid #bdbdbd;
    border-bottom-left-radius: 8px;
}

.favicon {
    height: 19px;
    width: 17px;
    flex-shrink: 0;
    margin-right: 7px;
    fill: #111;
    stroke: #111;
    stroke-width: 14;
}

.tab-title {
    flex: 1;
    overflow: hidden;
    white-space: nowrap;
    -webkit-mask-image: linear-gradient(to right, #000 82%, transparent 98%);
    mask-image: linear-gradient(to right, #000 82%, transparent 98%);
}

.tab-close {
    margin-left: 8px;
    font-size: 16px;
}

.tab-new {
    margin: 0 0 6px 5px;
    font-size: 20px;
    line-height: 24px;
}

/* address bar */
.toolbar {
    display: flex;
    align-items: center;
    height: 48px;
    padding: 0 22px 0 14px;
    border-top: 1px solid #bdbdbd;
    border-radius: 12px 12px 0 0;
}

.tool-icon {
    width: 16px;
    height: 16px;
    margin-right: 20px;
    fill: none;
    stroke: #1f1f1f;
    stroke-width: 1.6;
}

.tool-off {
    stroke: #8f8f8f;
}

.omnibox {
    display: flex;
    align-items: center;
    margin-left: 7px;
    font-family: "DejaVu Sans Mono", monospace;
    color: #1f1f1f;
}

.warn-icon {
    width: 16px;
    height: 16px;
    margin-right: 4px;
    fill: none;
    stroke: #1f1f1f;
    stroke-width: 1.2;
}

.not-secure {
    font-size: 15px;
    margin-right: 16px;
}

.url {
    font-size: 13.3px;
}

.url-path {
    color: #6b6b6b;
}

.tool-right {
    display: flex;
    align-items: center;
    margin-left: auto;
}

.tool-star {
    width: 18px;
    height: 18px;
    margin-right: 31px;
    fill: none;
    stroke: #444;
    stroke-width: 44;
}

.ext-ten {
    width: 20px;
    margin: 6px 12px 0 0;
    display: flex;
    flex-direction: column;
    align-items: center;
}

.ext-ten-roof {
    width: 0;
    height: 0;
    border-left: 9px solid transparent;
    border-right: 9px solid transparent;
    border-bottom: 6px solid #4a12a8;
}

.ext-ten-num {
    width: 20px;
    height: 16px;
    background-color: #6e42bd;
    border-radius: 0 0 3px 3px;
    color: #fff;
    font-family: "DejaVu Sans Mono", monospace;
    font-weight: 700;
    font-size: 12px;
    line-height: 16px;
    text-align: center;
}

.ext-urp {
    width: 28px;
    margin: 6px 14px 0 0;
    display: flex;
    flex-direction: column;
    align-items: center;
}

.ext-urp-top {
    width: 15px;
    height: 8px;
    background-image: linear-gradient(20deg, #e08a1a 50%, #b9b4a6 50%);
    border-radius: 8px 8px 0 0;
}

.ext-urp-txt {
    width: 28px;
    height: 15px;
    background-color: #ffcf00;
    border-radius: 3px;
    color: #1a1a1a;
    font-family: "DejaVu Sans Mono", monospace;
    font-weight: 700;
    font-size: 12px;
    line-height: 14px;
    text-align: center;
}

.tool-ext {
    width: 16px;
    height: 18px;
    margin-right: 38px;
    fill: none;
    stroke: #111;
    stroke-width: 1.8;
}

.tool-flask {
    width: 16px;
    height: 16px;
    margin-right: 20px;
    fill: none;
    stroke: #111;
    stroke-width: 1.8;
}

.tool-panel {
    width: 16px;
    height: 16px;
    margin-right: 18px;
    fill: none;
    stroke: #111;
    stroke-width: 1.6;
}

.tool-panel .fill {
    fill: #111;
}

.profile {
    display: flex;
    align-items: center;
    justify-content: center;
    width: 20px;
    height: 20px;
    margin-right: 25px;
    background-color: #d3e3fd;
    border-radius: 50%;
}

.profile svg {
    width: 14px;
    height: 14px;
    fill: #0b57d0;
}

.tool-dots {
    display: flex;
    flex-direction: column;
    gap: 4px;
}

.tool-dots span {
    width: 3px;
    height: 3px;
    background-color: #111;
    border-radius: 50%;
}

/* bookmarks */
.bookmarks {
    display: flex;
    align-items: center;
    height: 34px;
    padding: 0 0 6px 14px;
    font-family: "DejaVu Sans Mono", monospace;
    font-size: 15px;
    color: #1f1f1f;
    border-bottom: 1px solid #dcdcdc;
}

.bm-folder {
    width: 16px;
    height: 14px;
    margin-right: 8px;
    fill: none;
    stroke: #333;
    stroke-width: 1.2;
}

.bm-chef {
    width: 16px;
    height: 16px;
    margin: 0 6px 0 16px;
    fill: #dadada;
}

/* page */
.page {
    display: flex;
    flex: 1;
    min-height: 0;
}

.sidebar {
    width: 288px;
    flex-shrink: 0;
    background-color: #20304a;
    box-shadow: 3px 0 14px rgba(60, 90, 150, 0.25);
    z-index: 1;
}

.logo {
    display: flex;
    align-items: center;
    height: 66px;
    padding-left: 11px;
    background-color: #2e4a6e;
    color: #fff;
}

.logo-icon {
    height: 33px;
    width: 29px;
    fill: #fff;
    margin-right: 7px;
}

/* the wordmark is much wider than any installed light face */
.logo-word {
    display: inline-block;
    width: 108px;
    font-family: Inter, sans-serif;
    font-weight: 200;
    font-size: 25px;
    transform: scaleX(1.17);
    transform-origin: left center;
}

.logo-reg {
    font-size: 7px;
    align-self: flex-start;
    margin-top: 22px;
}

.menu-item {
    display: flex;
    align-items: center;
    height: 40px;
    padding-right: 12px;
    color: #fff;
    font-size: 15.2px;
}

.menu-toggle {
    background-color: #3f628f;
}

.menu-current {
    background-color: #2e4a6e;
}

.menu-icon {
    display: flex;
    align-items: center;
    justify-content: center;
    width: 46px;
    flex-shrink: 0;
}

.menu-icon svg {
    height: 19px;
    fill: #fff;
}

.menu-icon .toggle-icon {
    width: 22px;
    height: 14px;
    fill: none;
    stroke: #fff;
    stroke-width: 2.2;
}

.menu-toggle .menu-text {
    margin-left: 1px;
}

.menu-text {
    flex: 1;
}

.menu-chevron {
    height: 16px;
    margin-right: 23px;
    fill: #fff;
}

.menu-grid {
    height: 16px;
    fill: #fff;
}

.wrapper {
    display: flex;
    flex-direction: column;
    flex: 1;
    min-width: 0;
}

.topbar {
    display: flex;
    align-items: center;
    flex-shrink: 0;
    height: 66px;
    padding-left: 16px;
    background-color: #20304a;
    color: #fff;
}

.topbar-home {
    height: 19px;
    fill: #fff;
    margin-right: 9px;
}

.topbar-title {
    flex: 1;
    font-size: 19.2px;
    font-weight: 400;
}

.version {
    display: flex;
    align-items: center;
    gap: 4px;
    margin-right: 24px;
    color: #b4bcc8;
    font-size: 12px;
}

.version svg {
    height: 11px;
    fill: #b4bcc8;
}

.pill {
    display: flex;
    align-items: center;
    height: 36px;
    margin-right: 9px;
    padding: 0 12px 0 4px;
    background-color: #3f628f;
    border-radius: 18px;
    font-size: 12px;
    color: #fff;
}

.pill-last {
    margin-right: 21px;
    padding-right: 9px;
}

.pill-icon {
    display: flex;
    align-items: center;
    justify-content: center;
    gap: 7px;
    width: 27px;
    height: 28px;
    margin-right: 8px;
    background-color: #20304a;
    border-radius: 14px;
    font-size: 13px;
}

.pill-icon-wide {
    width: 43px;
}

.pill-icon svg {
    height: 16px;
    fill: #fff;
}

.pill-chevron {
    height: 12px;
    margin-left: 8px;
    fill: #fff;
}

.content {
    flex: 1;
    min-height: 0;
    overflow: hidden;
    padding: 32px 34px 0 32px;
    background-color: #edf1f6;
}

/* alert */
.alert {
    display: flex;
    height: 143px;
    margin-bottom: 16px;
    background-color: #fef7f7;
    border: 1px solid #c52827;
    border-radius: 4px;
    color: #c52827;
    font-size: 16px;
    line-height: 26px;
}

.alert-side {
    display: flex;
    align-items: center;
    justify-content: center;
    width: 43px;
    flex-shrink: 0;
    background-color: #c52827;
}

.alert-side svg {
    width: 16px;
    height: 16px;
    fill: none;
    stroke: #fff;
    stroke-width: 1.4;
}

.alert-body {
    flex: 1;
    padding: 7px 0 0 12px;
}

.alert-body p {
    margin-bottom: 20px;
}

.alert-close {
    flex-shrink: 0;
    width: 15px;
    height: 20px;
    margin: 11px 14px 0 18px;
    fill: #c52827;
}

/* cards */
.columns {
    display: grid;
    grid-template-columns: 1fr 1fr;
    gap: 20px;
}

.column {
    display: flex;
    flex-direction: column;
    gap: 16px;
    min-width: 0;
}

.card {
    background-color: #fff;
    border-radius: 4px;
    box-shadow: 0 4px 14px rgba(90, 120, 170, 0.1);
}

.card-head {
    display: flex;
    align-items: center;
    justify-content: space-between;
    height: 62px;
    padding: 2px 16px 0;
    color: #1e2f47;
}

.card-head-line {
    height: 63px;
    border-bottom: 1px solid #ced8e7;
}

.card-head h2 {
    display: flex;
    align-items: center;
    gap: 4px;
    font-size: 16px;
    font-weight: 700;
}

.card-head h2 svg {
    height: 16px;
    fill: #1e2f47;
}

.card-cog {
    height: 17px;
    fill: #3a567d;
}

.tiles {
    display: grid;
    grid-template-columns: repeat(3, 1fr);
    gap: 16px;
    padding: 0 16px 16px;
}

.tile {
    display: flex;
    height: 96px;
    background-color: #f3f6fb;
    border: 1px solid #e5ebf4;
    border-radius: 4px;
    overflow: hidden;
    color: #46628a;
    font-size: 14px;
    font-weight: 500;
}

.tile-main {
    display: flex;
    flex-direction: column;
    align-items: flex-start;
    justify-content: flex-end;
    flex: 1;
    padding: 0 0 10px 16px;
}

.tile-main svg {
    height: 32px;
    margin: 0 0 4px 3px;
    fill: #48638a;
}

.tile-main span {
    line-height: 22px;
}

.tile-add {
    display: flex;
    align-items: flex-end;
    justify-content: center;
    width: 41px;
    padding-bottom: 9px;
    background-color: #e5ecf5;
}

.tile-add svg {
    height: 20px;
    fill: #48638a;
}

.tile-ok {
    background-color: #f2f8f3;
    color: #3e7d47;
}

.tile-ok .tile-main {
    padding-bottom: 7px;
}

.tile-ok .tile-main span {
    margin-left: 3px;
}

.tile-ok .tile-main svg {
    margin-bottom: 1px;
    fill: #55a45b;
}

/* sample data */
.sample {
    padding: 16px 16px 0;
    height: 104px;
    border-bottom: 1px solid #ced8e7;
}

.sample-top {
    display: flex;
    align-items: center;
    color: #132f53;
}

.sample-top > svg {
    height: 16px;
    margin-right: 9px;
    fill: #3a567d;
}

.sample-top h3 {
    flex: 1;
    font-size: 16px;
    font-weight: 700;
}

.btn-install {
    display: flex;
    align-items: center;
    gap: 3px;
    height: 29px;
    padding: 0 9px;
    background-color: #3f628f;
    border-radius: 3px;
    color: #fff;
    font-size: 13px;
}

.btn-install svg {
    height: 13px;
    fill: #fff;
}

.sample-desc {
    margin: 4px 0 0 8px;
    padding-left: 17px;
    border-left: 4px solid #e5ecf5;
    color: #3a3a3a;
    font-size: 12.8px;
    line-height: 19px;
}

/* page scrollbar */
.scrollbar {
    display: flex;
    flex-direction: column;
    align-items: center;
    width: 15px;
    flex-shrink: 0;
    background-color: #f1f1f1;
}

.scroll-up,
.scroll-down {
    width: 0;
    height: 0;
    border-left: 4px solid transparent;
    border-right: 4px solid transparent;
}

.scroll-up {
    margin-top: 5px;
    border-bottom: 5px solid #a3a3a3;
}

.scroll-thumb {
    width: 15px;
    height: 334px;
    margin-top: 5px;
    background-color: #c1c1c1;
}

.scroll-down {
    margin-top: auto;
    margin-bottom: 5px;
    border-top: 5px solid #505050;
}
```
